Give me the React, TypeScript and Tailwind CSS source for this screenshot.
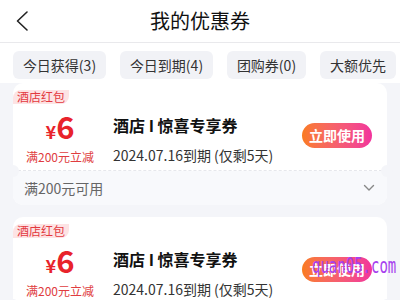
import React from 'react';

const filters = [
  { label: '今日获得(3)', w: 'w-[93px]' },
  { label: '今日到期(4)', w: 'w-[93px]' },
  { label: '团购券(0)', w: 'w-[79px]' },
  { label: '大额优先', w: 'w-[76px]' },
];

const Coupon = ({ footer }: { footer?: boolean }) => (
  <div className="relative rounded-[10px] bg-white">
    <div className="h-[87px]">
      <div className="inline-block h-[14px] rounded-tl-[8px] rounded-br-[8px] bg-[#fde3e4] px-[4px] text-[12px] leading-[14px] text-[#e33a3f]">
        酒店红包
      </div>
      <div className="flex">
        <div className="flex w-[94px] flex-col items-center">
          <div className="mt-[4px] flex h-[30px] items-baseline font-bold leading-[30px] text-[#e8232b]">
            <span className="text-[18px]">¥</span>
            <span className="text-[31px]">6</span>
          </div>
          <div className="mt-[8px] text-[12px] leading-[16px] text-[#e03c40]">满200元立减</div>
        </div>
        <div className="ml-[6px] flex-1">
          <div className="mt-[7px] text-[16px] font-bold leading-[22px] text-[#111]">酒店 I 惊喜专享券</div>
          <div className="mt-[9px] text-[14px] leading-[20px] text-[#333]">2024.07.16到期 (仅剩5天)</div>
        </div>
        <div className="mr-[15px] mt-[16px] flex h-[25px] w-[70px] items-center justify-center rounded-full bg-linear-to-r from-[#fa7b1b] to-[#f2339c] text-[14px] font-bold text-white">
          立即使用
        </div>
      </div>
    </div>
    {footer && (
      <>
        <div className="relative border-t border-dashed border-[#e6e7ec]">
          <div className="absolute -left-[6px] -top-[6px] h-[12px] w-[12px] rounded-full bg-[#f4f5f9]" />
          <div className="absolute -right-[6px] -top-[6px] h-[12px] w-[12px] rounded-full bg-[#f4f5f9]" />
        </div>
        <div className="flex h-[34px] items-center justify-between rounded-b-[10px] bg-[#f8f9fc] pl-[11px] pr-[12px]">
          <span className="text-[14px] text-[#666]">满200元可用</span>
          <svg width="12" height="8" viewBox="0 0 12 8" fill="none">
            <path d="M1.5 1.5 6 6 10.5 1.5" stroke="#888" strokeWidth="1.4" strokeLinecap="round" strokeLinejoin="round" />
          </svg>
        </div>
      </>
    )}
  </div>
);

export default function App() {
  return (
    <div
      className="relative h-[300px] w-[400px] overflow-hidden bg-[#f4f5f9]"
      style={{ fontFamily: '"Noto Sans CJK SC", "Noto Sans", sans-serif' }}
    >
      <div className="grid h-[43px] grid-cols-[56px_1fr_56px] items-center border-b border-[#e9e9ec] bg-white">
        <div className="pl-[15px]">
          <svg width="14" height="22" viewBox="0 0 14 22" fill="none">
            <path d="M12 2 2.5 11 12 20" stroke="#222" strokeWidth="1.6" strokeLinecap="round" strokeLinejoin="round" />
          </svg>
        </div>
        <div className="text-center text-[20px] leading-[28px] text-[#111]">我的优惠券</div>
        <div />
      </div>
      <div className="flex h-[40px] gap-[14px] bg-white pl-[13px] pt-[8px]">
        {filters.map((f) => (
          <div
            key={f.label}
            className={`${f.w} flex h-[28px] shrink-0 items-center justify-center rounded-[6px] bg-[#f1f2f6] text-[14px] text-[#333]`}
          >
            {f.label}
          </div>
        ))}
      </div>
      <div className="flex flex-col gap-[12px] px-[13px]">
        <Coupon footer />
        <Coupon footer />
      </div>
      <div
        className="absolute left-[312px] top-[255px] origin-top-left scale-y-150 text-[14px] leading-[15px] text-[#a640ee]"
        style={{ fontFamily: '"DejaVu Sans Mono", monospace' }}
      >
        quan05.com
      </div>
    </div>
  );
}
